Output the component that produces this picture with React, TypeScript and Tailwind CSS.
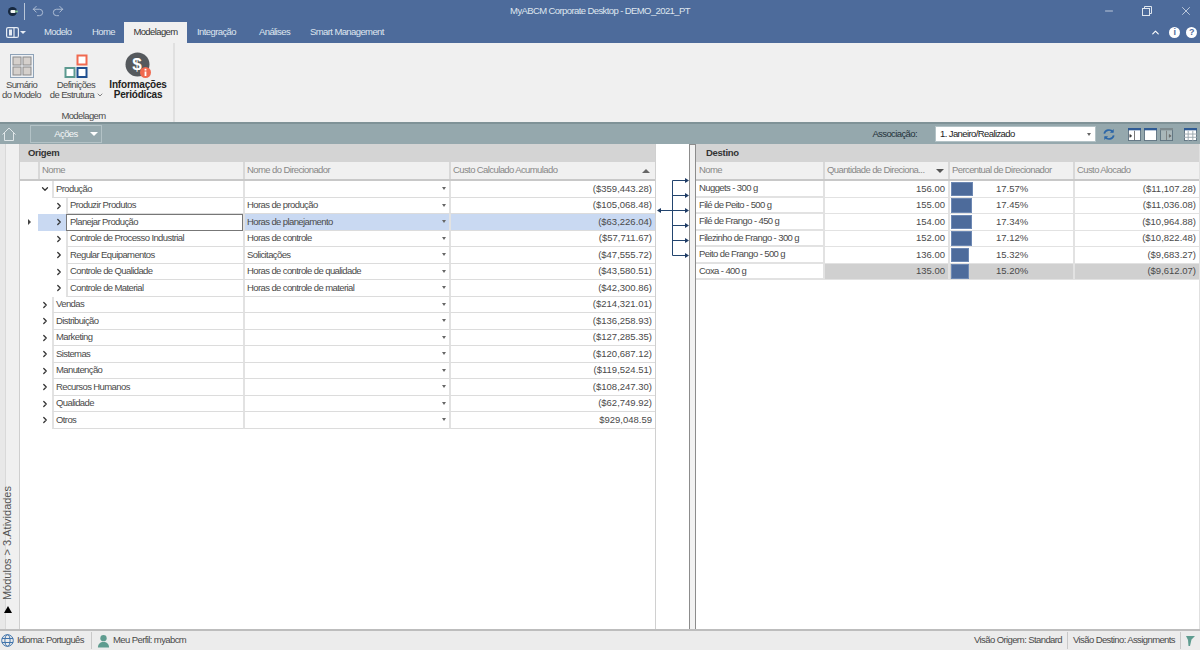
import { ChevronDown, ChevronRight, ChevronUp, Minus, Redo2, Undo2, X } from "lucide-react"

type OrigemRow = { nome: string; direcionador: string; custo: string; level: number; open?: boolean; selected?: boolean }

const origemRows: OrigemRow[] = [
  { nome: "Produção", direcionador: "", custo: "($359,443.28)", level: 0, open: true },
  { nome: "Produzir Produtos", direcionador: "Horas de produção", custo: "($105,068.48)", level: 1 },
  { nome: "Planejar Produção", direcionador: "Horas de planejamento", custo: "($63,226.04)", level: 1, selected: true },
  { nome: "Controle de Processo Industrial", direcionador: "Horas de controle", custo: "($57,711.67)", level: 1 },
  { nome: "Regular Equipamentos", direcionador: "Solicitações", custo: "($47,555.72)", level: 1 },
  { nome: "Controle de Qualidade", direcionador: "Horas de controle de qualidade", custo: "($43,580.51)", level: 1 },
  { nome: "Controle de Material", direcionador: "Horas de controle de material", custo: "($42,300.86)", level: 1 },
  { nome: "Vendas", direcionador: "", custo: "($214,321.01)", level: 0 },
  { nome: "Distribuição", direcionador: "", custo: "($136,258.93)", level: 0 },
  { nome: "Marketing", direcionador: "", custo: "($127,285.35)", level: 0 },
  { nome: "Sistemas", direcionador: "", custo: "($120,687.12)", level: 0 },
  { nome: "Manutenção", direcionador: "", custo: "($119,524.51)", level: 0 },
  { nome: "Recursos Humanos", direcionador: "", custo: "($108,247.30)", level: 0 },
  { nome: "Qualidade", direcionador: "", custo: "($62,749.92)", level: 0 },
  { nome: "Otros", direcionador: "", custo: "$929,048.59", level: 0 },
]

const destinoRows = [
  { nome: "Nuggets - 300 g", qtd: "156.00", pct: "17.57%", bar: 22, custo: "($11,107.28)" },
  { nome: "Filé de Peito - 500 g", qtd: "155.00", pct: "17.45%", bar: 21, custo: "($11,036.08)" },
  { nome: "Filé de Frango - 450 g", qtd: "154.00", pct: "17.34%", bar: 21, custo: "($10,964.88)" },
  { nome: "Filezinho de Frango - 300 g", qtd: "152.00", pct: "17.12%", bar: 21, custo: "($10,822.48)" },
  { nome: "Peito de Frango - 500 g", qtd: "136.00", pct: "15.32%", bar: 18, custo: "($9,683.27)" },
  { nome: "Coxa - 400 g", qtd: "135.00", pct: "15.20%", bar: 18, custo: "($9,612.07)" },
]

function ViewIcon({ kind }: { kind: "left" | "full" | "right" | "grid" }) {
  const head = kind === "right" ? "#7d8a8e" : "#2f5a94"
  return (
    <svg width="13" height="13" viewBox="0 0 14 14">
      <rect x="0.5" y="0.5" width="13" height="13" fill={kind === "right" ? "#a9b7ba" : "#fff"} stroke="#5f7480" />
      <rect x="0" y="0" width="14" height="2.5" fill={head} />
      {kind === "left" && <path d="M7 3v10M2 7l2 1.5L2 10z" stroke="#333" fill="#333" strokeWidth="0.7" />}
      {kind === "right" && <path d="M7 3v10M10 7l2 1.5L10 10z" stroke="#666" fill="#666" strokeWidth="0.7" />}
      {kind === "grid" && <path d="M0 6.5h14M0 10h14M4.5 3v11M9.5 3v11" stroke="#9aa8ae" strokeWidth="1" />}
    </svg>
  )
}

function SumarioIcon() {
  return (
    <svg width="24" height="24" viewBox="0 0 24 24">
      <rect x="0.5" y="0.5" width="23" height="23" fill="#eef1f4" stroke="#8fa3b8" />
      <rect x="3" y="3" width="8" height="8" fill="#d5d0cc" stroke="#8a8a8a" />
      <rect x="13" y="3" width="8" height="8" fill="#d5d0cc" stroke="#8a8a8a" />
      <rect x="3" y="13" width="8" height="8" fill="#d5d0cc" stroke="#8a8a8a" />
      <rect x="13" y="13" width="8" height="8" fill="#d5d0cc" stroke="#8a8a8a" />
    </svg>
  )
}

function DefinicoesIcon() {
  return (
    <svg width="24" height="24" viewBox="0 0 24 24">
      <rect x="13.5" y="1.5" width="9" height="9" fill="#fff" stroke="#f0694f" strokeWidth="2" />
      <rect x="1.5" y="14" width="9" height="9" fill="#fff" stroke="#5c9a90" strokeWidth="2" />
      <rect x="13.5" y="14" width="9" height="9" fill="#fff" stroke="#1f4f8f" strokeWidth="2" />
    </svg>
  )
}

function InformacoesIcon() {
  return (
    <svg width="28" height="28" viewBox="0 0 28 28">
      <circle cx="12.5" cy="12.5" r="12" fill="#55595d" />
      <text x="12" y="18" textAnchor="middle" fontSize="17" fontWeight="700" fill="#fff" fontFamily="Liberation Sans">$</text>
      <circle cx="20.5" cy="20.5" r="5.5" fill="#f0694f" />
      <rect x="19.6" y="19.5" width="1.8" height="4.5" fill="#fff" />
      <rect x="19.6" y="16.8" width="1.8" height="1.7" fill="#fff" />
    </svg>
  )
}

function Arrows() {
  const ys = [2.5, 17.5, 32.5, 47.5, 62.5, 77.5]
  return (
    <svg width="33" height="90" viewBox="0 0 33 90">
      <path d="M16.5 2.5V77.5" stroke="#23456f" strokeWidth="1" fill="none" />
      <path d="M3 32.5H30" stroke="#23456f" strokeWidth="1" fill="none" />
      <path d="M1 32.5l4-2.5v5z" fill="#1e3a63" />
      {ys.map((y) => (
        <g key={y}>
          <path d={`M16.5 ${y}H30`} stroke="#23456f" strokeWidth="1" fill="none" />
          <path d={`M29 ${y - 2.5}l4 2.5-4 2.5z`} fill="#1e3a63" />
        </g>
      ))}
    </svg>
  )
}

function Caret() {
  return <span className="w-0 h-0 border-x-[2.5px] border-x-transparent border-t-[3px] border-t-[#666]" />
}

export default function App() {
  return (
    <div className="w-[1200px] h-[650px] flex flex-col overflow-hidden bg-white text-[9.5px] tracking-[-0.6px] text-[#4a4a4a] font-['Liberation_Sans',sans-serif]">
      {/* TITLE BAR + TABS */}
      <div className="h-[43px] bg-[#4d6b9b] flex flex-col shrink-0 text-[#dfe6ef]">
        <div className="h-[22px] flex items-center">
          <div className="w-[200px] flex items-center">
            <div className="w-[24px] flex justify-center pl-[1px]">
              <svg width="10" height="9" viewBox="0 0 10 9">
                <circle cx="4.5" cy="4.5" r="4.5" fill="#16283f" />
                <rect x="2.5" y="3" width="5" height="3" rx="1" fill="#f2f5f2" />
                <rect x="7" y="3.5" width="3" height="2" rx="1" fill="#7fbf8f" />
              </svg>
            </div>
            <span className="w-px h-[17px] bg-[#b9c6d8]" />
            <div className="flex items-center gap-[6px] pl-[6px] text-[#b8c6da]">
              <Undo2 size={14} strokeWidth={1.5} />
              <Redo2 size={14} strokeWidth={1.5} />
            </div>
          </div>
          <span className="flex-1 text-center">MyABCM Corporate Desktop - DEMO_2021_PT</span>
          <div className="w-[200px] flex items-center justify-end gap-[27px] pr-[7px] text-[#dfe6ef]">
            <Minus size={12} strokeWidth={1.5} />
            <svg width="10" height="10" viewBox="0 0 10 10" fill="none" stroke="currentColor">
              <rect x="0.5" y="2.5" width="7" height="7" />
              <path d="M2.5 2.5v-2h7v7h-2" />
            </svg>
            <X size={14} strokeWidth={1.3} />
          </div>
        </div>
        <div className="flex-1 flex items-end">
          <div className="w-[34px] h-full flex items-center pl-[6px] gap-px pb-[1px]">
            <svg width="13" height="11" viewBox="0 0 13 11" fill="none" stroke="#e6ecf4" strokeWidth="1.2">
              <rect x="0.6" y="0.6" width="11.8" height="9.8" rx="1.5" />
              <rect x="3" y="2.5" width="3" height="6" fill="#e6ecf4" stroke="none" />
              <path d="M8 1v9" />
            </svg>
            <span className="w-0 h-0 border-x-[3px] border-x-transparent border-t-[3px] border-t-[#e6ecf4]" />
          </div>
          <span className="h-full flex items-center pl-[10px] w-[58px]">Modelo</span>
          <span className="h-full flex items-center w-[32px]">Home</span>
          <span className="h-[21px] w-[63px] bg-[#f0f0f0] text-[#333] flex items-center justify-center">Modelagem</span>
          <span className="h-full flex items-center pl-[10px] w-[72px]">Integração</span>
          <span className="h-full flex items-center w-[51px]">Análises</span>
          <span className="h-full flex items-center">Smart Management</span>
          <div className="ml-auto h-full flex items-center gap-[6px] pr-[3px] pl-1">
            <ChevronUp size={11} strokeWidth={2.5} className="text-white mr-[2px]" />
            <span className="w-[11px] h-[11px] rounded-full bg-white text-[#4d6b9b] text-[9px] font-bold flex items-center justify-center">i</span>
            <span className="w-[11px] h-[11px] rounded-full bg-white text-[#4d6b9b] text-[9px] font-bold flex items-center justify-center">?</span>
          </div>
        </div>
      </div>

      {/* RIBBON */}
      <div className="h-[79px] bg-[#f0f0f0] flex shrink-0">
        <div className="w-[175px] border-r-2 border-[#e0e0e0] flex flex-col items-stretch">
          <div className="flex h-[66px] pt-[9px]">
            <div className="w-[43px] flex flex-col items-center">
              <div className="h-[28px] flex items-center"><SumarioIcon /></div>
              <span className="leading-[10px] text-center">Sumário</span>
              <span className="leading-[10px] text-center whitespace-nowrap">do Modelo</span>
            </div>
            <div className="w-[66px] flex flex-col items-center">
              <div className="h-[28px] flex items-center"><DefinicoesIcon /></div>
              <span className="leading-[10px] text-center">Definições</span>
              <span className="leading-[10px] text-center whitespace-nowrap flex items-center gap-[2px] pl-[2px]">
                de Estrutura
                <ChevronDown size={8} strokeWidth={2} />
              </span>
            </div>
            <div className="w-[58px] flex flex-col items-center text-[#222] font-bold text-[10px] tracking-[-0.2px]">
              <div className="h-[28px] flex items-center pl-px"><InformacoesIcon /></div>
              <span className="leading-[10px] text-center">Informações</span>
              <span className="leading-[10px] text-center">Periódicas</span>
            </div>
          </div>
          <div className="text-center pr-[6px] pt-[1px] leading-[12px]">Modelagem</div>
        </div>
      </div>

      {/* TOOLBAR */}
      <div className="h-[22px] bg-[#95a8ad] border-t-2 border-[#7f9297] flex items-center shrink-0 text-[#f4f6f7]">
        <div className="w-[30px] pl-[2px] flex items-center">
          <svg width="14" height="14" viewBox="0 0 14 14" fill="none" stroke="#dfe6e8" strokeWidth="1">
            <path d="M0.5 7.5 7 1l6.5 6.5M2.5 6v7.5h9V6" />
          </svg>
        </div>
        <div className="w-[72px] h-[18px] border border-[#b3c2c6] flex items-center relative">
          <span className="w-full text-center">Ações</span>
          <span className="absolute right-[3px] top-[6px] w-0 h-0 border-x-[4px] border-x-transparent border-t-[4px] border-t-white" />
        </div>
        <span className="ml-auto text-[#24323a] mr-[18px]">Associação:</span>
        <div className="w-[161px] h-[16px] bg-white border border-[#b3c2c6] flex items-center justify-between pl-[4px] pr-[4px] text-[#222]">
          <span>1. Janeiro/Realizado</span>
          <Caret />
        </div>
        <div className="w-[32px] flex justify-center pr-[6px]">
          <svg width="12" height="13" viewBox="0 0 14 14" fill="none" stroke="#2b66a8" strokeWidth="2">
            <path d="M1.5 6a5.5 5 0 0 1 10-2" />
            <path d="M12.5 8a5.5 5 0 0 1-10 2" />
            <path d="M12.5 0.5v4.5h-4.5z" fill="#2b66a8" stroke="none" />
            <path d="M1.5 13.5V9h4.5z" fill="#2b66a8" stroke="none" />
          </svg>
        </div>
        <div className="flex items-center gap-[3px] pr-[3px]">
          <ViewIcon kind="left" />
          <ViewIcon kind="full" />
          <ViewIcon kind="right" />
          <span className="w-[5px]" />
          <ViewIcon kind="grid" />
        </div>
      </div>

      {/* MAIN */}
      <div className="flex-1 flex min-h-0">
        {/* LEFT STRIP */}
        <div className="w-[20px] bg-[#f0f0f0] border-r border-[#cfcfcf] shrink-0 flex">
          <div className="w-[6px] bg-[#e8e8e8]" />
          <div className="flex-1 flex flex-col justify-end items-start pb-[16px] border-l border-[#d9d9d9] -ml-px">
            <span className="[writing-mode:vertical-rl] rotate-180 text-[11px] tracking-normal leading-[13px] text-[#555] whitespace-nowrap -ml-[5px] mb-[6px]">Módulos &gt; 3.Atividades</span>
            <span className="w-0 h-0 -ml-[2px] border-x-[4px] border-x-transparent border-b-[7px] border-b-black" />
          </div>
        </div>

        {/* ORIGEM */}
        <div className="w-[636px] shrink-0 flex flex-col border-r border-[#d0d0d0]">
          <div className="h-[18px] bg-[#d4d4d4] font-bold text-[#333] tracking-[-0.3px] flex items-center pl-[8px] shrink-0">Origem</div>
          <div className="h-[19px] bg-[#f0f0f0] border-b-2 border-[#c8c8c8] grid grid-cols-[18px_205px_206px_1fr] text-[#888] shrink-0">
            <div />
            <div className="border-l-2 border-[#d8d8d8] pl-[2px] flex items-center">Nome</div>
            <div className="border-l-2 border-[#d8d8d8] pl-[2px] flex items-center">Nome do Direcionador</div>
            <div className="border-l-2 border-[#d8d8d8] pl-[2px] flex items-center justify-between pr-[5px]">
              Custo Calculado Acumulado
              <span className="w-0 h-0 border-x-[4px] border-x-transparent border-b-[4px] border-b-[#666]" />
            </div>
          </div>
          {origemRows.map((r) => (
            <div key={r.nome} className="h-[16.5px] grid grid-cols-[18px_205px_206px_1fr] shrink-0">
              <div className="flex items-center justify-center">
                {r.selected && <span className="w-0 h-0 border-y-[3px] border-y-transparent border-l-[3px] border-l-[#444]" />}
              </div>
              <div className={`flex items-center ${r.selected ? "bg-[#c9d9f2]" : ""}`}>
                {r.level === 1 && <div className="w-[14px] shrink-0" />}
                <div className="w-[14px] shrink-0 h-full flex items-center justify-center">
                  {r.open ? (
                    <ChevronDown size={10} strokeWidth={3} className="text-[#333]" />
                  ) : (
                    <ChevronRight size={10} strokeWidth={3} className="text-[#333]" />
                  )}
                </div>
                <div
                  className={`flex-1 h-full flex items-center whitespace-nowrap ${
                    r.selected
                      ? "bg-white border border-[#777] pl-[3px]"
                      : "border-l-2 border-l-[#e2e2e2] border-b border-b-[#dcdcdc] pl-[2px]"
                  }`}
                >
                  {r.nome}
                </div>
              </div>
              <div className={`flex items-center justify-between pl-[2px] pr-[3px] border-l-2 border-l-[#e2e2e2] border-b border-b-[#dcdcdc] ${r.selected ? "bg-[#c9d9f2]" : ""}`}>
                <span>{r.direcionador}</span>
                <Caret />
              </div>
              <div className={`flex items-center justify-end pr-[3px] tracking-normal border-l-2 border-l-[#e2e2e2] border-b border-b-[#dcdcdc] ${r.selected ? "bg-[#c9d9f2]" : ""}`}>
                {r.custo}
              </div>
            </div>
          ))}
        </div>

        {/* CONNECTOR */}
        <div className="w-[33px] shrink-0 pt-[34px]">
          <Arrows />
        </div>

        {/* SPLITTER */}
        <div className="w-[7px] shrink-0 bg-[#f2f2f2] border-x border-t border-[#8c8c8c]" />

        {/* DESTINO */}
        <div className="flex-1 flex flex-col min-w-0 border-r border-[#e0e0e0]">
          <div className="h-[18px] bg-[#d4d4d4] font-bold text-[#333] tracking-[-0.3px] flex items-center pl-[10px] shrink-0">Destino</div>
          <div className="h-[19px] bg-[#f0f0f0] border-b-2 border-[#c8c8c8] grid grid-cols-[127px_125px_125px_1fr] text-[#888] shrink-0">
            <div className="pl-[3px] flex items-center">Nome</div>
            <div className="border-l-2 border-[#d8d8d8] pl-[2px] pr-[4px] flex items-center justify-between whitespace-nowrap">
              Quantidade de Direciona...
              <span className="w-0 h-0 border-x-[4px] border-x-transparent border-t-[4px] border-t-[#555]" />
            </div>
            <div className="border-l-2 border-[#d8d8d8] pl-[2px] flex items-center whitespace-nowrap">Percentual de Direcionador</div>
            <div className="border-l-2 border-[#d8d8d8] pl-[2px] flex items-center">Custo Alocado</div>
          </div>
          {destinoRows.map((r, i) => {
            const last = i === destinoRows.length - 1
            return (
              <div key={r.nome} className="h-[16.5px] grid grid-cols-[127px_125px_125px_1fr] shrink-0">
                <div className="pl-[3px] flex items-center border-b-2 border-[#e2e2e2] whitespace-nowrap">{r.nome}</div>
                <div className={`flex items-center justify-end pr-[3px] tracking-normal border-l-2 border-[#e2e2e2] border-b ${last ? "bg-[#d0d0d0]" : ""}`}>{r.qtd}</div>
                <div className={`relative flex items-center tracking-normal border-l-2 border-[#e2e2e2] border-b ${last ? "bg-[#d0d0d0]" : ""}`}>
                  <div className="h-[14.5px] bg-[#4d6b9b] border border-[#6d88b3] ml-px" style={{ width: r.bar }} />
                  <span className="absolute left-[46px]">{r.pct}</span>
                </div>
                <div className={`flex items-center justify-end pr-[3px] tracking-normal border-l-2 border-[#e2e2e2] border-b ${last ? "bg-[#d0d0d0]" : ""}`}>{r.custo}</div>
              </div>
            )
          })}
        </div>
      </div>

      {/* STATUS BAR */}
      <div className="h-[21px] shrink-0 bg-[#ececec] border-t-2 border-[#bdbdbd] flex items-center">
        <svg width="13" height="13" viewBox="0 0 13 13" fill="none" stroke="#3f73ab" strokeWidth="1" className="ml-[1px]">
          <circle cx="6.5" cy="6.5" r="5.8" />
          <ellipse cx="6.5" cy="6.5" rx="2.6" ry="5.8" />
          <path d="M1 4.5h11M1 8.5h11" />
        </svg>
        <span className="pl-[3px] w-[77px]">Idioma: Português</span>
        <span className="w-px h-[17px] bg-[#c8c8c8]" />
        <svg width="13" height="14" viewBox="0 0 14 14" fill="#5f9c90" className="ml-[5px]">
          <circle cx="7" cy="4" r="3.4" />
          <path d="M1 14c0-4 2.5-6 6-6s6 2 6 6z" />
        </svg>
        <span className="pl-[3px]">Meu Perfil: myabcm</span>
        <span className="ml-auto pr-[5px]">Visão Origem: Standard</span>
        <span className="w-px h-[17px] bg-[#c8c8c8]" />
        <span className="pl-[5px] pr-[5px]">Visão Destino: Assignments</span>
        <span className="w-px h-[17px] bg-[#c8c8c8]" />
        <svg width="10" height="12" viewBox="0 0 10 12" className="ml-[4px] mr-[5px]">
          <path d="M1 1h9L6.5 4.5 5 11H3.5L3 5z" fill="#5f9c90" />
        </svg>
      </div>
    </div>
  )
}
